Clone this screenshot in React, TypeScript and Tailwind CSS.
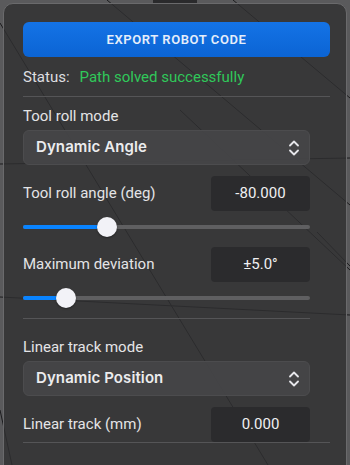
import React from 'react';

const font = { fontFamily: 'Roboto, "Noto Sans", sans-serif' };

function Chevrons() {
	return (
		<svg width="10" height="16" viewBox="0 0 10 16" fill="none" stroke="#e6e6ea" strokeWidth="1.8" strokeLinecap="round" strokeLinejoin="round">
			<path d="M1 5.5 L5 1.5 L9 5.5" />
			<path d="M1 10.5 L5 14.5 L9 10.5" />
		</svg>
	);
}

function Select({ label, value }: { label: string; value: string }) {
	return (
		<>
			<div className="mt-[9px] h-5 flex items-center text-[15px] text-[#e4e4e6]">{label}</div>
			<div className="mt-1 h-[35px] flex items-center justify-between pl-3 pr-[10px] rounded-md bg-[#464648]/90 border border-[#4c4c4e]">
				<span className="text-[15px] font-semibold text-[#ececee] tracking-[0.1px]" style={{ fontFamily: 'Inter, sans-serif' }}>
					{value}
				</span>
				<Chevrons />
			</div>
		</>
	);
}

function NumberRow({ label, value, className }: { label: string; value: string; className: string }) {
	return (
		<div className={`h-[35px] flex items-center justify-between ${className}`}>
			<span className="text-[15px] text-[#e4e4e6]">{label}</span>
			<div className="w-[99px] h-[35px] flex items-center justify-center rounded bg-[#2b2b2d] text-[15px] text-[#f0f0f2]">
				{value}
			</div>
		</div>
	);
}

function Slider({ frac }: { frac: number }) {
	const center = frac * 266 + 10;
	return (
		<div className="relative mt-[6px] h-5">
			<div className="absolute left-0 right-0 top-2 h-1 rounded-full bg-[#5f5f61]" />
			<div className="absolute left-0 top-2 h-1 rounded-full bg-[#0a84ff]" style={{ width: center }} />
			<div
				className="absolute top-0 w-5 h-5 rounded-full bg-[#f2f2f7] shadow-[0_1px_2px_rgba(0,0,0,0.4)]"
				style={{ left: center - 10 }}
			/>
		</div>
	);
}

export default function App() {
	return (
		<div className="relative w-[350px] h-[465px] overflow-hidden bg-[#5a5a5c]" style={font}>
			<svg className="absolute inset-0" width="350" height="465" stroke="#1c1c1e" strokeWidth="1">
				<line x1="0" y1="23" x2="268" y2="465" />
				<line x1="107" y1="0" x2="350" y2="205" />
				<line x1="233" y1="0" x2="350" y2="98" />
				<line x1="0" y1="164" x2="350" y2="158" />
				<line x1="0" y1="297" x2="350" y2="315" />
				<line x1="0" y1="410" x2="12" y2="465" />
				<line x1="317" y1="232" x2="350" y2="266" />
				<line x1="180" y1="110" x2="350" y2="270" />
				<rect x="153" y="0" width="44" height="3" fill="#2a2a2c" stroke="none" />
			</svg>
			<div className="relative ml-[3px] mt-[3px] w-[344px] h-[470px] rounded-t-[10px] border border-[#6a6a6c] bg-[#2f2f31]/80 pl-[19px] pr-[16px] pt-[18px]">
				<button className="w-full h-[35px] rounded-md bg-gradient-to-b from-[#1473e6] to-[#0b64d4] text-[13px] font-semibold tracking-[0.6px] text-[#e6eefa]">
					EXPORT ROBOT CODE
				</button>
				<div className="mt-[10px] h-5 flex items-center gap-[10px] text-[15px]">
					<span className="text-[#dedee0]">Status:</span>
					<span className="text-[#30c85a]">Path solved successfully</span>
				</div>
				<div className="mt-[9px] border-t border-[#555557]" />
				<div className="pr-5">
					<Select label="Tool roll mode" value="Dynamic Angle" />
					<NumberRow label="Tool roll angle (deg)" value="-80.000" className="mt-[11px]" />
					<Slider frac={0.278} />
					<NumberRow label="Maximum deviation" value="±5.0°" className="mt-[10px]" />
					<Slider frac={0.124} />
					<div className="mt-[10px] h-[10px] border-t border-[#555557]" />
					<Select label="Linear track mode" value="Dynamic Position" />
					<NumberRow label="Linear track (mm)" value="0.000" className="mt-[11px]" />
				</div>
				<div className="border-t border-[#555557]" />
			</div>
		</div>
	);
}
